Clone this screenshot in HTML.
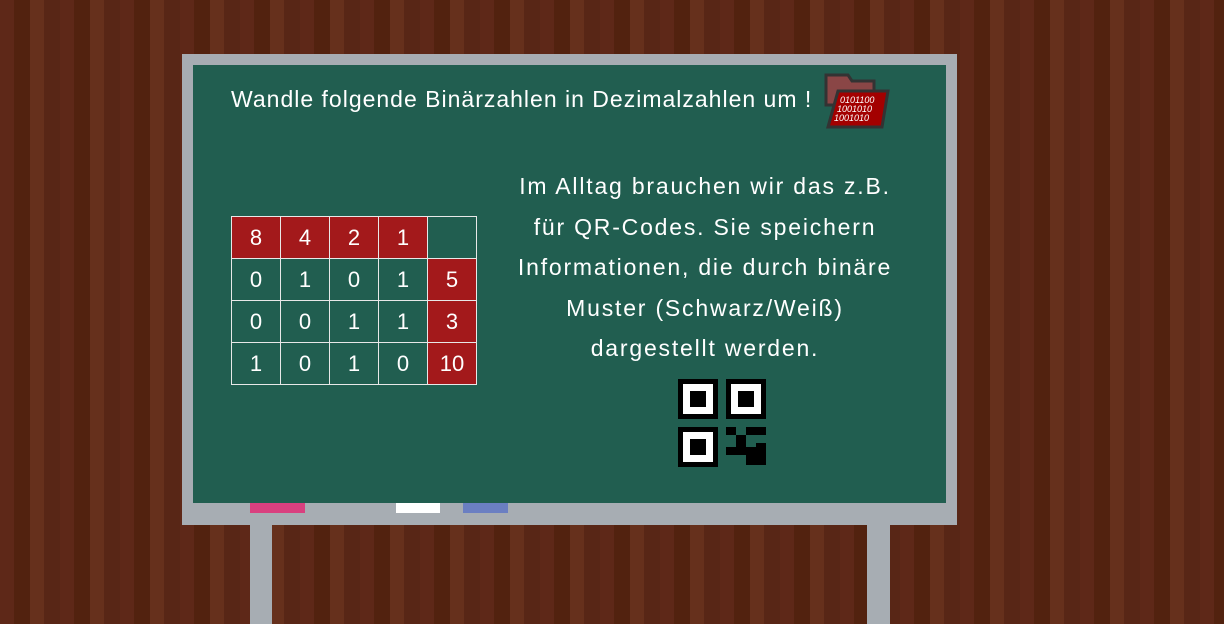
<!DOCTYPE html><html><head><style>
body{margin:0;width:1224px;height:624px;overflow:hidden;position:relative;
background:repeating-linear-gradient(90deg,#5e2818 0 14px,#52220f 14px 30px,#66301c 30px 44px,#582616 44px 60px);font-family:"Liberation Sans",sans-serif;}
.d{position:absolute}
.t{position:absolute;color:#fff}
table{position:absolute;left:231px;top:216px;border-collapse:collapse}
td{width:48px;height:41px;border:1px solid #e8e8e8;color:#fff;text-align:center;font-size:22px;padding:0}
.r{background:#a3191b}
</style></head><body>
<div class="d" style="left:250px;top:520px;width:22px;height:104px;background:#a7adb3"></div>
<div class="d" style="left:867px;top:520px;width:23px;height:104px;background:#a7adb3"></div>
<div class="d" style="left:182px;top:54px;width:775px;height:471px;background:#a7adb3"></div>
<div class="d" style="left:193px;top:65px;width:753px;height:438px;background:#215e50"></div>
<div class="d" style="left:250px;top:503px;width:55px;height:10px;background:#d9407f"></div>
<div class="d" style="left:396px;top:503px;width:44px;height:10px;background:#fff"></div>
<div class="d" style="left:463px;top:503px;width:45px;height:10px;background:#6b7fc2"></div>
<div class="t" style="left:231px;top:86px;font-size:23px;letter-spacing:1px">Wandle folgende Binärzahlen in Dezimalzahlen um !</div>
<svg class="d" style="left:824px;top:73px" width="66" height="57">
<path d="M2 2h22l4 6h22v24H2z" fill="#8a4646" stroke="#333" stroke-width="3"/>
<path d="M14 18h50l-6 36H4z" fill="#a30000" stroke="#333" stroke-width="3"/>
<text x="16" y="30" fill="#fff" font-size="9" font-style="italic" font-family="Liberation Sans">0101100</text>
<text x="13" y="39" fill="#fff" font-size="9" font-style="italic" font-family="Liberation Sans">1001010</text>
<text x="10" y="48" fill="#fff" font-size="9" font-style="italic" font-family="Liberation Sans">1001010</text>
</svg>
<div class="t" style="left:480px;top:166px;width:450px;text-align:center;font-size:23px;letter-spacing:1.8px;line-height:40.5px">Im Alltag brauchen wir das z.B.<br>für QR-Codes. Sie speichern<br>Informationen, die durch binäre<br>Muster (Schwarz/Weiß)<br>dargestellt werden.</div>
<table>
<tr><td class="r">8</td><td class="r">4</td><td class="r">2</td><td class="r">1</td><td></td></tr>
<tr><td>0</td><td>1</td><td>0</td><td>1</td><td class="r">5</td></tr>
<tr><td>0</td><td>0</td><td>1</td><td>1</td><td class="r">3</td></tr>
<tr><td>1</td><td>0</td><td>1</td><td>0</td><td class="r">10</td></tr>
</table>
<svg class="d" style="left:678px;top:379px" width="90" height="90">
<g fill="#000"><rect x="0" y="0" width="40" height="40"/><rect x="48" y="0" width="40" height="40"/><rect x="0" y="48" width="40" height="40"/></g>
<g fill="#fff"><rect x="5" y="5" width="30" height="30"/><rect x="53" y="5" width="30" height="30"/><rect x="5" y="53" width="30" height="30"/></g>
<g fill="#000"><rect x="12" y="12" width="16" height="16"/><rect x="60" y="12" width="16" height="16"/><rect x="12" y="60" width="16" height="16"/>
<rect x="48" y="48" width="10" height="8"/><rect x="68" y="48" width="20" height="8"/><rect x="58" y="56" width="10" height="12"/><rect x="48" y="68" width="30" height="8"/><rect x="78" y="64" width="10" height="12"/><rect x="68" y="76" width="20" height="10"/></g>
</svg>
</body></html>
